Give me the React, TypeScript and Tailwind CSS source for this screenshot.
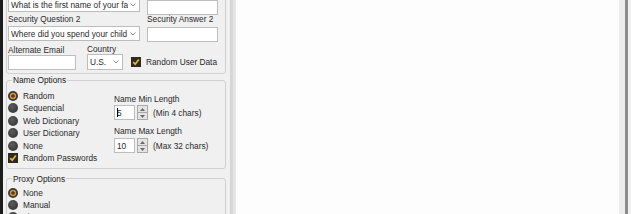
import React from "react";

function Chevron() {
  return (
    <svg width="6" height="4" viewBox="0 0 6 4" className="shrink-0">
      <path d="M0.5 0.5 L3 3 L5.5 0.5" fill="none" stroke="#8a8a8a" strokeWidth="1" />
    </svg>
  );
}

function Dropdown({ text, className }: { text: string; className: string }) {
  return (
    <div
      className={`flex items-center justify-between border border-[#bcbcbc] bg-white pl-[2px] pr-[3px] ${className}`}
    >
      <span className="overflow-hidden whitespace-nowrap">{text}</span>
      <Chevron />
    </div>
  );
}

function TextBox({ className }: { className: string }) {
  return <div className={`border border-[#bdbdbd] bg-white ${className}`} />;
}

function Radio({ label, checked }: { label: string; checked?: boolean }) {
  return (
    <div className="flex h-[12.5px] items-center gap-[5px]">
      {checked ? (
        <span className="h-[10px] w-[10px] rounded-full bg-[radial-gradient(circle,#5a3c14_0_1.4px,#d0913a_2px_3px,#3a3a3a_3.6px)]" />
      ) : (
        <span className="h-[10px] w-[10px] rounded-full bg-[radial-gradient(circle_at_40%_35%,#5c5c5c,#2e2e2e)]" />
      )}
      <span>{label}</span>
    </div>
  );
}

function Check({ label }: { label: string }) {
  return (
    <div className="flex items-center gap-[5px]">
      <span className="flex h-[10px] w-[10px] items-center justify-center bg-[#2e2a20]">
        <svg width="8" height="8" viewBox="0 0 8 8">
          <path d="M1.2 4.2 L3.2 6.2 L6.8 1.4" fill="none" stroke="#e6b43c" strokeWidth="1.7" />
        </svg>
      </span>
      <span>{label}</span>
    </div>
  );
}

function Spin({ value, caret, note }: { value: string; caret?: boolean; note: string }) {
  return (
    <div className="flex h-[15px] items-center">
      <div className="flex h-[15px] w-[21px] items-center border border-[#bdbdbd] bg-white pl-[2px]">
        {caret && <span className="mr-[-1px] h-[9px] w-[1px] bg-black" />}
        <span>{value}</span>
      </div>
      <div className="ml-[2px] flex h-[15px] w-[11px] flex-col border border-[#a9a9a9] bg-[#e4e4e4]">
        <div className="flex flex-1 items-center justify-center border-b border-[#a9a9a9]">
          <svg width="5" height="3" viewBox="0 0 5 3">
            <path d="M0 3 L2.5 0 L5 3 Z" fill="#6a6a6a" />
          </svg>
        </div>
        <div className="flex flex-1 items-center justify-center">
          <svg width="5" height="3" viewBox="0 0 5 3">
            <path d="M0 0 L2.5 3 L5 0 Z" fill="#6a6a6a" />
          </svg>
        </div>
      </div>
      <span className="ml-[5px]">{note}</span>
    </div>
  );
}

export default function App() {
  return (
    <div className="flex h-[214px] w-[631px] overflow-hidden bg-[#f0f0f0] font-['Liberation_Sans',Arial,sans-serif] text-[8.3px] leading-[10px] text-[#2a2a2a]">
      <div className="w-[3px] bg-[#1c1c1c]" />

      {/* Left settings panel */}
      <div className="flex w-[223px] flex-col pl-[3px]">
        {/* User data group (top cut off) */}
        <div className="-mt-[7px] rounded-[3px] border border-[#d0d0d0] pb-[3px] pl-[1px] pt-[3px]">
          <div className="flex items-start gap-[7px]">
            <Dropdown text="What is the first name of your fa" className="h-[15px] w-[132px]" />
            <TextBox className="mt-[3px] h-[15px] w-[71px]" />
          </div>
          <div className="-mt-[1px] flex gap-[7px]">
            <span className="w-[132px]">Security Question 2</span>
            <span>Security Answer 2</span>
          </div>
          <div className="mt-[2px] flex items-start gap-[7px]">
            <Dropdown text="Where did you spend your child" className="h-[15px] w-[132px]" />
            <TextBox className="mt-[1px] h-[15px] w-[71px]" />
          </div>
          <div className="mt-[3px] flex">
            <span className="w-[79px]">Alternate Email</span>
            <span className="-mt-[1px]">Country</span>
          </div>
          <div className="flex items-start">
            <TextBox className="h-[15px] w-[68px]" />
            <Dropdown text="U.S." className="-mt-[1px] ml-[11px] h-[16px] w-[36px]" />
            <div className="ml-[8px] mt-[2px]">
              <Check label="Random User Data" />
            </div>
          </div>
        </div>

        {/* Name Options */}
        <fieldset className="mt-[1px] rounded-[3px] border border-[#d0d0d0] pb-[3px]">
          <legend className="ml-[5px] px-[1px] text-[#1a1a1a]">Name Options</legend>
          <div className="flex">
            <div className="w-[107px] pl-[1px] pt-[4.5px]">
              <Radio label="Random" checked />
              <Radio label="Sequencial" />
              <Radio label="Web Dictionary" />
              <Radio label="User Dictionary" />
              <Radio label="None" />
              <div className="flex h-[12.5px] items-center">
                <Check label="Random Passwords" />
              </div>
            </div>
            <div className="flex flex-col pt-[8.5px]">
              <span>Name Min Length</span>
              <div className="mt-[1.5px]">
                <Spin value="5" caret note="(Min 4 chars)" />
              </div>
              <span className="mt-[6px]">Name Max Length</span>
              <div className="mt-[2px]">
                <Spin value="10" note="(Max 32 chars)" />
              </div>
            </div>
          </div>
        </fieldset>

        {/* Proxy Options */}
        <fieldset className="mt-[5px] rounded-[3px] border border-[#d0d0d0] pb-[3px]">
          <legend className="ml-[5px] px-[1px] text-[#1a1a1a]">Proxy Options</legend>
          <div className="pl-[1px] pt-[3px]">
            <div className="flex h-[12px] items-center">
              <Radio label="None" checked />
            </div>
            <div className="flex h-[12px] items-center">
              <Radio label="Manual" />
            </div>
            <div className="flex h-[12px] items-center">
              <Radio label="List" />
            </div>
          </div>
        </fieldset>
      </div>

      {/* Splitter */}
      <div className="w-[4px]" />
      <div className="w-[3px] bg-[#d6d6d6]" />
      <div className="w-[3px] bg-[#e6e6e6]" />

      {/* Output area */}
      <div className="flex-1 bg-[#fdfdfd]" />

      <div className="w-[6px] bg-[#ececec]" />
      <div className="w-[3px] bg-[#8c8c8c]" />
      <div className="w-[3px] bg-[#f0f0f0]" />
    </div>
  );
}
